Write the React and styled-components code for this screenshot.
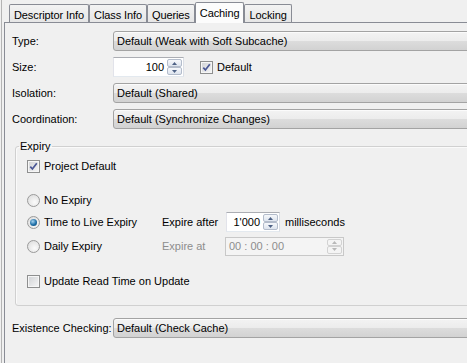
import React from 'react';
import styled, { createGlobalStyle } from 'styled-components';

const Global = createGlobalStyle`
  html, body { margin: 0; padding: 0; background: #f0f0f0; overflow: hidden; }
  body { font-family: "Liberation Sans", Arial, sans-serif; font-size: 11px; color: #000; }
  * { box-sizing: border-box; }
  #root { width: 467px; height: 363px; overflow: hidden; }
`;

const Root = styled.div`
  width: 466px;
  height: 363px;
  margin-left: 1px;
  border-left: 1px solid #b4b4b4;
  padding-left: 2px;
  display: flex;
  flex-direction: column;
  overflow: hidden;
`;

const TabStrip = styled.div`
  display: flex;
  align-items: flex-end;
  height: 22px;
  padding-left: 5px;
  position: relative;
  z-index: 1;
  flex: none;
`;

const Tab = styled.div`
  height: ${p => (p.$active ? '21px' : '18px')};
  margin-bottom: ${p => (p.$active ? '-1px' : '0')};
  padding: ${p => (p.$active ? '0 4px' : '2px 4px 0')};
  display: flex;
  align-items: center;
  white-space: nowrap;
  letter-spacing: -0.1px;
  border: 1px solid #898c95;
  border-bottom: none;
  border-radius: 2px 2px 0 0;
  background: ${p => (p.$active ? '#fcfcfc' : 'linear-gradient(#f3f3f3, #e6e6e6)')};
`;

const Panel = styled.div`
  width: 620px;
  height: 420px;
  flex: none;
  border: 1px solid #898c95;
  padding: 8px 0 0 7px;
  background: #f0f0f0;
  display: flex;
  flex-direction: column;
`;

const FormRows = styled.div`
  display: flex;
  flex-direction: column;
  gap: 6px;
`;

const Row = styled.div`
  display: flex;
  align-items: center;
  height: 20px;
  margin-top: ${p => p.$top || 0}px;
`;

const Label = styled.span`
  width: ${p => p.$w || 101}px;
  flex: none;
  white-space: nowrap;
  color: ${p => (p.$disabled ? '#8d8d8d' : '#000')};
`;

const Combo = styled.div`
  flex: 1;
  height: 20px;
  border: 1px solid #a3a3a3;
  border-radius: 3px;
  background: linear-gradient(#f3f3f3 0%, #ececec 48%, #dcdcdc 52%, #d2d2d2 100%);
  box-shadow: inset 0 1px 0 #fbfbfb;
  padding-left: 3px;
  display: flex;
  align-items: center;
  white-space: nowrap;
`;

const SpinBox = styled.div`
  width: ${p => p.$w}px;
  height: ${p => p.$h || 20}px;
  flex: none;
  display: flex;
  border: 1px solid;
  border-color: ${p => (p.$disabled ? '#c8c8c8' : '#abadb3 #dbdfe6 #e3e9ef #e2e3ea')};
  background: ${p => (p.$disabled ? '#f4f4f4' : '#fff')};
`;

const SpinValue = styled.span`
  flex: 1;
  align-self: center;
  text-align: ${p => (p.$left ? 'left' : 'right')};
  padding: ${p => (p.$left ? '0 0 0 3px' : '0 3px 0 0')};
  color: ${p => (p.$disabled ? '#8d8d8d' : '#000')};
  white-space: nowrap;
`;

const SpinButtons = styled.div`
  width: 16px;
  flex: none;
  display: flex;
  flex-direction: column;
  padding: 1px 1px 1px 0;
`;

const SpinButton = styled.div`
  flex: 1;
  border: 1px solid ${p => (p.$disabled ? '#d2d2d2' : '#b3bccb')};
  border-radius: 2px;
  background: ${p => (p.$disabled ? '#f4f4f4' : 'linear-gradient(#f6f8fb, #dde4ee)')};
  display: flex;
  align-items: center;
  justify-content: center;
`;

const Arrow = ({ up, disabled }) => (
  <svg width="5" height="3" viewBox="0 0 5 3">
    <path d={up ? 'M0 3 L2.5 0 L5 3 Z' : 'M0 0 L5 0 L2.5 3 Z'} fill={disabled ? '#b8b8b8' : '#4d6185'} />
  </svg>
);

const Spinner = ({ w, h, value, disabled, left }) => (
  <SpinBox $w={w} $h={h} $disabled={disabled}>
    <SpinValue $disabled={disabled} $left={left}>{value}</SpinValue>
    <SpinButtons>
      <SpinButton $disabled={disabled}><Arrow up disabled={disabled} /></SpinButton>
      <SpinButton $disabled={disabled}><Arrow disabled={disabled} /></SpinButton>
    </SpinButtons>
  </SpinBox>
);

const Choice = styled.label`
  display: flex;
  align-items: center;
  gap: 4px;
  width: ${p => (p.$w ? `${p.$w}px` : 'auto')};
  flex: none;
  white-space: nowrap;
  margin-left: ${p => p.$ml || 0}px;
`;

const Box = styled.span`
  width: 13px;
  height: 13px;
  flex: none;
  border: 1px solid #8e8f8f;
  box-shadow: inset 0 0 0 1px #f6f6f6;
  background: linear-gradient(135deg, #cfd1d4, #f7f7f7);
  display: inline-flex;
  align-items: center;
  justify-content: center;
`;

const Round = styled.span`
  width: 13px;
  height: 13px;
  flex: none;
  border-radius: 50%;
  border: 1px solid #9a9a9a;
  background: radial-gradient(circle at 60% 65%, #fbfbfb, #d9d9d9);
  display: inline-flex;
  align-items: center;
  justify-content: center;
`;

const Dot = styled.span`
  width: 7px;
  height: 7px;
  border-radius: 50%;
  background: radial-gradient(circle at 40% 35%, #a8d4f0, #1d6fa8 55%, #0e3f66);
`;

const CheckBox = ({ checked, children, ml }) => (
  <Choice $ml={ml}>
    <Box>
      {checked && (
        <svg width="9" height="9" viewBox="0 0 9 9">
          <path d="M1.3 4.6 L3.4 7 L7.8 1.2" fill="none" stroke="#4a5795" strokeWidth="1.7" />
        </svg>
      )}
    </Box>
    {children}
  </Choice>
);

const Radio = ({ checked, children, w }) => (
  <Choice $w={w}>
    <Round>{checked && <Dot />}</Round>
    {children}
  </Choice>
);

const Group = styled.fieldset`
  margin: 11px 0 0 3px;
  padding: 0 0 14px 3px;
  border: 1px solid #d0d0d0;
  border-radius: 3px;
  box-shadow: inset 1px 1px 0 #fafafa;
  min-width: 0;
`;

const Legend = styled.legend`
  padding: 0 1px;
  line-height: 13px;
`;

const GroupBody = styled.div`
  padding-left: 8px;
  display: flex;
  flex-direction: column;
`;

const Trailing = styled.span`
  margin-left: 5px;
  white-space: nowrap;
`;

export default function App() {
  const tabs = ['Descriptor Info', 'Class Info', 'Queries', 'Caching', 'Locking'];
  return (
    <>
      <Global />
      <Root>
        <TabStrip>
          {tabs.map(t => (
            <Tab key={t} $active={t === 'Caching'}>{t}</Tab>
          ))}
        </TabStrip>
        <Panel>
          <FormRows>
            <Row>
              <Label>Type:</Label>
              <Combo>Default (Weak with Soft Subcache)</Combo>
            </Row>
            <Row>
              <Label>Size:</Label>
              <Spinner w={71} value="100" />
              <CheckBox checked ml={16}>Default</CheckBox>
            </Row>
            <Row>
              <Label>Isolation:</Label>
              <Combo>Default (Shared)</Combo>
            </Row>
            <Row>
              <Label>Coordination:</Label>
              <Combo>Default (Synchronize Changes)</Combo>
            </Row>
          </FormRows>

          <Group>
            <Legend>Expiry</Legend>
            <GroupBody>
              <Row $top={3}>
                <CheckBox checked>Project Default</CheckBox>
              </Row>
              <Row $top={14}>
                <Radio w={135}>No Expiry</Radio>
              </Row>
              <Row $top={2}>
                <Radio w={135} checked>Time to Live Expiry</Radio>
                <Label $w={64}>Expire after</Label>
                <Spinner w={54} value="1'000" />
                <Trailing>milliseconds</Trailing>
              </Row>
              <Row $top={4}>
                <Radio w={135}>Daily Expiry</Radio>
                <Label $w={63} $disabled>Expire at</Label>
                <Spinner w={119} h={19} value="00 : 00 : 00" disabled left />
              </Row>
              <Row $top={15}>
                <CheckBox>Update Read Time on Update</CheckBox>
              </Row>
            </GroupBody>
          </Group>

          <Row $top={12}>
            <Label>Existence Checking:</Label>
            <Combo>Default (Check Cache)</Combo>
          </Row>
        </Panel>
      </Root>
    </>
  );
}
